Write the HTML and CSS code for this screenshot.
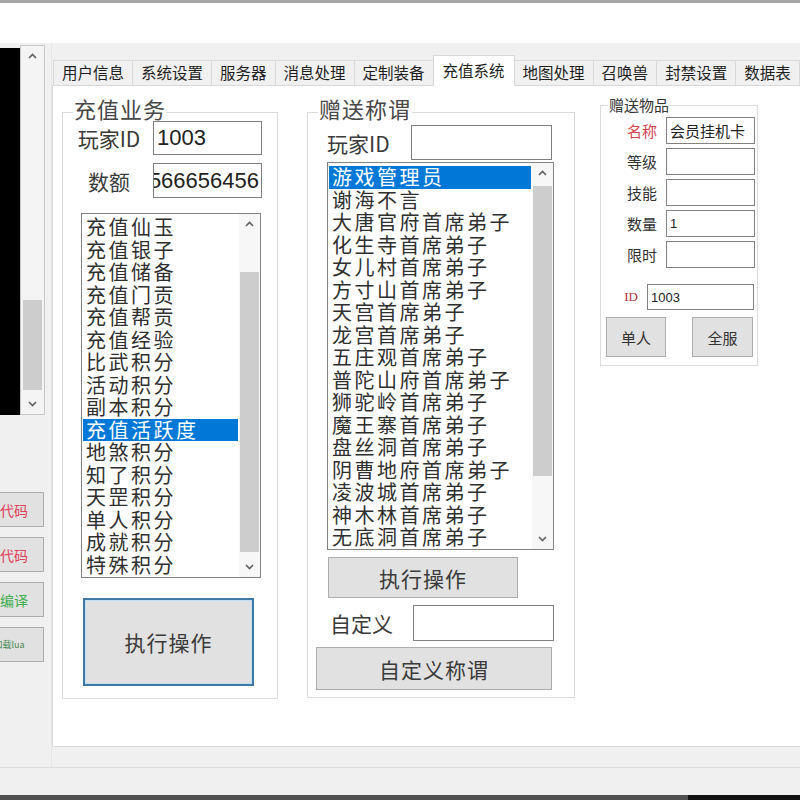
FILE: index.html
```html
<!DOCTYPE html>
<html lang="zh-CN">
<head>
<meta charset="utf-8">
<title>充值系统</title>
<link rel="stylesheet" href="styles.css">
</head>
<body>
<div class="topstrip"></div>
<div class="topgap"></div>
<div class="window">
  <div class="main">
    <div class="side">
      <div class="console">
        <div class="screen"></div>
        <div class="cscroll">
          <div class="arrow"><svg width="9" height="6" viewBox="0 0 9 6"><polyline points="1,5 4.5,1.5 8,5" fill="none" stroke="#606060" stroke-width="1.6"/></svg></div>
          <div class="ctrack"><div class="cthumb"></div></div>
          <div class="arrow"><svg width="9" height="6" viewBox="0 0 9 6"><polyline points="1,1 4.5,4.5 8,1" fill="none" stroke="#606060" stroke-width="1.6"/></svg></div>
        </div>
      </div>
      <div class="sbtns">
        <div class="sbtn red">生成代码</div>
        <div class="sbtn red">复制代码</div>
        <div class="sbtn green">开始编译</div>
        <div class="sbtn green small">重新加载lua</div>
      </div>
    </div>
    <div class="tabctl">
      <div class="tabs">
        <div class="tab">用户信息</div>
        <div class="tab">系统设置</div>
        <div class="tab">服务器</div>
        <div class="tab">消息处理</div>
        <div class="tab">定制装备</div>
        <div class="tab active">充值系统</div>
        <div class="tab">地图处理</div>
        <div class="tab">召唤兽</div>
        <div class="tab">封禁设置</div>
        <div class="tab">数据表</div>
      </div>
      <div class="panel">
        <div class="group g1">
          <div class="gtitle">充值业务</div>
          <div class="row r1">
            <div class="lbl c">玩家ID</div>
            <div class="input">1003</div>
          </div>
          <div class="row r2">
            <div class="lbl c">数额</div>
            <div class="input end">566656456</div>
          </div>
          <div class="listbox lb1">
            <div class="items">
              <div class="item">充值仙玉</div>
              <div class="item">充值银子</div>
              <div class="item">充值储备</div>
              <div class="item">充值门贡</div>
              <div class="item">充值帮贡</div>
              <div class="item">充值经验</div>
              <div class="item">比武积分</div>
              <div class="item">活动积分</div>
              <div class="item">副本积分</div>
              <div class="item sel">充值活跃度</div>
              <div class="item">地煞积分</div>
              <div class="item">知了积分</div>
              <div class="item">天罡积分</div>
              <div class="item">单人积分</div>
              <div class="item">成就积分</div>
              <div class="item">特殊积分</div>
            </div>
            <div class="vscroll">
              <div class="arrow"><svg width="9" height="6" viewBox="0 0 9 6"><polyline points="1,5 4.5,1.5 8,5" fill="none" stroke="#606060" stroke-width="1.6"/></svg></div>
              <div class="track t1"><div class="thumb"></div></div>
              <div class="arrow"><svg width="9" height="6" viewBox="0 0 9 6"><polyline points="1,1 4.5,4.5 8,1" fill="none" stroke="#606060" stroke-width="1.6"/></svg></div>
            </div>
          </div>
          <div class="btn bigbtn">执行操作</div>
        </div>

        <div class="group g2">
          <div class="gtitle">赠送称谓</div>
          <div class="row r3">
            <div class="lbl">玩家ID</div>
            <div class="input"></div>
          </div>
          <div class="listbox lb2">
            <div class="items">
              <div class="item sel">游戏管理员</div>
              <div class="item">谢海不言</div>
              <div class="item">大唐官府首席弟子</div>
              <div class="item">化生寺首席弟子</div>
              <div class="item">女儿村首席弟子</div>
              <div class="item">方寸山首席弟子</div>
              <div class="item">天宫首席弟子</div>
              <div class="item">龙宫首席弟子</div>
              <div class="item">五庄观首席弟子</div>
              <div class="item">普陀山府首席弟子</div>
              <div class="item">狮驼岭首席弟子</div>
              <div class="item">魔王寨首席弟子</div>
              <div class="item">盘丝洞首席弟子</div>
              <div class="item">阴曹地府首席弟子</div>
              <div class="item">凌波城首席弟子</div>
              <div class="item">神木林首席弟子</div>
              <div class="item">无底洞首席弟子</div>
            </div>
            <div class="vscroll">
              <div class="arrow"><svg width="9" height="6" viewBox="0 0 9 6"><polyline points="1,5 4.5,1.5 8,5" fill="none" stroke="#606060" stroke-width="1.6"/></svg></div>
              <div class="track t2"><div class="thumb"></div></div>
              <div class="arrow"><svg width="9" height="6" viewBox="0 0 9 6"><polyline points="1,1 4.5,4.5 8,1" fill="none" stroke="#606060" stroke-width="1.6"/></svg></div>
            </div>
          </div>
          <div class="btn midbtn">执行操作</div>
          <div class="row r4">
            <div class="lbl">自定义</div>
            <div class="input"></div>
          </div>
          <div class="btn widebtn">自定义称谓</div>
        </div>

        <div class="group g3">
          <div class="gtitle small">赠送物品</div>
          <div class="frow first">
            <div class="flbl red">名称</div>
            <div class="finput">会员挂机卡</div>
          </div>
          <div class="frow">
            <div class="flbl">等级</div>
            <div class="finput"></div>
          </div>
          <div class="frow">
            <div class="flbl">技能</div>
            <div class="finput"></div>
          </div>
          <div class="frow">
            <div class="flbl">数量</div>
            <div class="finput num">1</div>
          </div>
          <div class="frow">
            <div class="flbl">限时</div>
            <div class="finput"></div>
          </div>
          <div class="frow idrow">
            <div class="flbl idl">ID</div>
            <div class="finput num wide">1003</div>
          </div>
          <div class="brow">
            <div class="btn sbtn2 b1">单人</div>
            <div class="btn sbtn2 b2">全服</div>
          </div>
        </div>
      </div>
    </div>
  </div>
  <div class="statusline"></div>
</div>
<div class="taskbar"><div class="tb-dark"></div></div>
</body>
</html>
```

FILE: styles.css
```css
* { box-sizing: border-box; }

html, body {
  margin: 0;
  padding: 0;
}

body {
  width: 800px;
  height: 800px;
  overflow: hidden;
  background: #fff;
  font-family: "Noto Sans CJK SC", "Noto Sans", sans-serif;
  color: #2a2a2a;
}

.topstrip { height: 3px; background: #a6a6a6; }
.topgap { height: 40px; background: #fff; }

.window {
  height: 752px;
  background: #f0f0f0;
  display: flex;
  flex-direction: column;
}

.main { height: 724px; display: flex; }

.statusline { flex: 1; border-top: 1px solid #dcdcdc; }

.taskbar {
  height: 5px;
  background: #505050;
  display: flex;
  justify-content: flex-end;
}
.tb-dark { width: 112px; background: #111; }

/* ---------- left side ---------- */
.side {
  width: 52px;
  flex: none;
  display: flex;
  flex-direction: column;
  border-right: 1px solid #e6e6e6;
}

.console {
  margin-top: 2px;
  height: 370px;
  display: flex;
}

.screen {
  width: 20px;
  margin-top: 3px;
  background: #000;
}

.cscroll {
  width: 25px;
  border: 1px solid #c8c8c8;
  background: #f4f4f4;
  display: flex;
  flex-direction: column;
}

.arrow {
  height: 20px;
  flex: none;
  display: flex;
  align-items: center;
  justify-content: center;
}

.ctrack {
  flex: 1;
  display: flex;
  flex-direction: column;
  justify-content: flex-end;
  padding: 0 2px 4px;
}
.cthumb { height: 90px; background: #cdcdcd; }

.sbtns {
  margin-top: 77px;
  display: flex;
  flex-direction: column;
  gap: 10px;
}

.sbtn {
  width: 88px;
  height: 35px;
  margin-left: -44px;
  background: #e1e1e1;
  border: 1px solid #adadad;
  display: flex;
  align-items: center;
  justify-content: center;
  font-size: 14px;
  white-space: nowrap;
  overflow: hidden;
}
.sbtn.red { color: #e0405a; }
.sbtn.green { color: #3fae4f; }
.sbtn.small { font-size: 9px; color: #4d8a55; }

/* ---------- tab control ---------- */
.tabctl {
  flex: 1;
  margin-top: 12px;
  display: flex;
  flex-direction: column;
  min-width: 0;
}

.tabs {
  height: 30px;
  display: flex;
  align-items: flex-end;
  padding-left: 1px;
}

.tab {
  height: 25px;
  padding: 0 8px;
  font-size: 15.5px;
  line-height: 1;
  color: #1e1e1e;
  border: 1px solid #d9d9d9;
  border-bottom: none;
  margin-right: -1px;
  background: #f0f0f0;
  display: flex;
  align-items: center;
  white-space: nowrap;
  flex: none;
}

.tab.active {
  height: 31px;
  margin-bottom: -1px;
  background: #fff;
  position: relative;
  z-index: 1;
  padding: 0 9px;
}

.panel {
  height: 662px;
  background: #fff;
  border: 1px solid #d9d9d9;
  border-right: none;
  display: flex;
  align-items: flex-start;
}

/* ---------- group boxes ---------- */
.group {
  border: 1px solid #dcdcdc;
  display: flex;
  flex-direction: column;
  align-items: flex-start;
  flex: none;
}

.g1 { margin: 26px 0 0 9px; width: 216px; height: 587px; }
.g2 { margin: 26px 0 0 29px; width: 268px; height: 586px; }
.g3 { margin: 19px 0 0 25px; width: 158px; height: 261px; }

.gtitle {
  margin-top: -17px;
  margin-left: 10px;
  padding: 0 1px;
  background: #fff;
  font-size: 22px;
  line-height: 24px;
  color: #474747;
  letter-spacing: 1px;
}
.gtitle.small {
  margin-top: -10px;
  margin-left: 7px;
  font-size: 15px;
  line-height: 18px;
  letter-spacing: 0;
  color: #333;
}

.row { display: flex; align-items: center; }

.lbl {
  font-size: 21px;
  color: #3a3a3a;
  white-space: nowrap;
}
.lbl.c { text-align: center; }

.input {
  background: #fff;
  border: 1px solid #7f7f7f;
  display: flex;
  align-items: center;
  padding: 0 3px;
  font-family: "Liberation Sans", sans-serif;
  font-size: 22px;
  color: #222;
  white-space: nowrap;
  overflow: hidden;
}
.input.end { justify-content: flex-end; padding-right: 2px; }

.r1 { margin-top: 1px; height: 34px; padding-left: 7px; }
.r2 { margin-top: 8px; height: 35px; padding-left: 7px; }
.r1 .lbl, .r2 .lbl { width: 78px; }
.r1 .input, .r2 .input { margin-left: 5px; width: 109px; height: 100%; }

.r3 { margin-top: 5px; height: 35px; padding-left: 19px; }
.r3 .lbl { width: 74px; }
.r3 .input { margin-left: 10px; width: 141px; height: 100%; }

.r4 { margin-top: 7px; height: 36px; padding-left: 22px; }
.r4 .lbl { width: 83px; }
.r4 .input { width: 141px; height: 100%; }

/* ---------- list boxes ---------- */
.listbox {
  display: flex;
  background: #fff;
  border: 1px solid #828282;
}

.lb1 { margin: 15px 0 0 18px; width: 180px; height: 365px; }
.lb2 { margin: 2px 0 0 19px; width: 227px; height: 388px; }

.items {
  flex: 1;
  overflow: hidden;
  padding: 2px 1px 0 1px;
}
.lb2 .items { padding-top: 3px; }

.item {
  height: 22.5px;
  line-height: 22.5px;
  font-size: 20px;
  letter-spacing: 2.5px;
  padding-left: 3px;
  white-space: nowrap;
  color: #2f2f2f;
}
.item.sel { background: #0078d7; color: #fff; }

.vscroll {
  width: 21px;
  flex: none;
  display: flex;
  flex-direction: column;
  background: #f7f7f7;
}

.track {
  flex: 1;
  display: flex;
  flex-direction: column;
  padding: 0 1px;
}
.thumb { background: #cdcdcd; }
.t1 { padding-top: 38px; padding-bottom: 5px; }
.t1 .thumb { flex: 1; }
.t2 { padding-top: 3px; padding-bottom: 53px; }
.t2 .thumb { flex: 1; }

/* ---------- buttons ---------- */
.btn {
  background: #e1e1e1;
  border: 1px solid #adadad;
  display: flex;
  align-items: center;
  justify-content: center;
  font-size: 21px;
  color: #3a3a3a;
  letter-spacing: 1px;
  white-space: nowrap;
}

.bigbtn {
  margin: 20px 0 0 20px;
  width: 171px;
  height: 88px;
  border: 2px solid #3f78a6;
  box-shadow: inset 0 0 0 1px #bfe0f5;
}

.midbtn { margin: 7px 0 0 20px; width: 190px; height: 41px; }
.widebtn { margin: 6px 0 0 8px; width: 236px; height: 43px; }

/* ---------- gift group ---------- */
.frow { display: flex; align-items: center; height: 27px; margin-top: 4px; }
.frow.first { margin-top: 3px; }
.frow.idrow { margin-top: 16px; height: 26px; }

.flbl {
  width: 56px;
  text-align: right;
  font-size: 15px;
  color: #333;
}
.flbl.red { color: #d2454f; }
.flbl.idl {
  width: 37px;
  font-family: "Liberation Serif", serif;
  font-size: 13px;
  color: #b2333b;
}

.finput {
  margin-left: 9px;
  width: 89px;
  height: 100%;
  background: #fff;
  border: 1px solid #828282;
  display: flex;
  align-items: center;
  padding: 0 3px;
  font-size: 15px;
  color: #222;
  white-space: nowrap;
  overflow: hidden;
}
.finput.num { font-family: "Liberation Sans", sans-serif; font-size: 13px; }
.finput.wide { width: 107px; }

.brow { display: flex; margin-top: 7px; }
.sbtn2 { width: 60px; height: 40px; font-size: 15px; letter-spacing: 0; color: #333; }
.b1 { margin-left: 5px; }
.b2 { margin-left: 26px; width: 61px; }
```
